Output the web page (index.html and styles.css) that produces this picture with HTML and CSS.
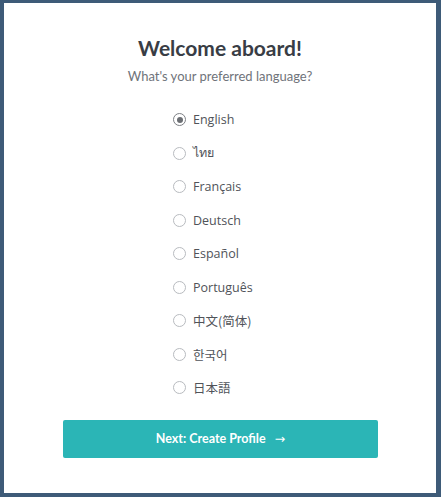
FILE: index.html
```html
<!DOCTYPE html>
<html>
<head>
<meta charset="utf-8">
<link rel="stylesheet" href="styles.css">
</head>
<body>
<div class="card">
  <h1 class="title">Welcome aboard!</h1>
  <p class="subtitle">What's your preferred language?</p>
  <ul class="langs">
    <li class="lang"><span class="radio checked"></span><span>English</span></li>
    <li class="lang"><span class="radio"></span><span class="thai">ไทย</span></li>
    <li class="lang"><span class="radio"></span><span>Français</span></li>
    <li class="lang"><span class="radio"></span><span>Deutsch</span></li>
    <li class="lang"><span class="radio"></span><span>Español</span></li>
    <li class="lang"><span class="radio"></span><span>Português</span></li>
    <li class="lang"><span class="radio"></span><span class="cjk">中文(简体)</span></li>
    <li class="lang"><span class="radio"></span><span class="cjk kr">한국어</span></li>
    <li class="lang"><span class="radio"></span><span class="cjk jp">日本語</span></li>
  </ul>
  <button class="next">Next: Create Profile <span class="arrow">→</span></button>
</div>
</body>
</html>
```
FILE: styles.css
```css
html, body {
  margin: 0;
  padding: 0;
}
body {
  width: 441px;
  height: 497px;
  background: #3e5b78;
  font-family: Lato, "Open Sans", sans-serif;
  padding: 3px 5px 4px 4px;
  box-sizing: border-box;
}
.card {
  background: #ffffff;
  height: 490px;
  display: flex;
  flex-direction: column;
  align-items: center;
  box-sizing: border-box;
  padding-top: 33px;
}
.title {
  margin: 0;
  font-size: 21px;
  line-height: 24px;
  font-weight: 700;
  color: #393d45;
}
.subtitle {
  margin: 8px 0 0;
  font-size: 13px;
  line-height: 16px;
  color: #6f737a;
}
.langs {
  list-style: none;
  margin: 19px 0 0;
  padding: 0;
  display: flex;
  flex-direction: column;
  width: 88px;
  margin-left: -6px;
}
.lang {
  display: flex;
  align-items: center;
  gap: 7px;
  height: 33.5px;
  font-family: "Open Sans", Lato, sans-serif;
  font-size: 12.5px;
  color: #505359;
}
.radio {
  width: 11px;
  height: 11px;
  border: 1px solid #b8bbbf;
  border-radius: 50%;
  box-sizing: content-box;
  flex: none;
  position: relative;
}
.radio.checked {
  border-color: #7d8085;
}
.radio.checked::after {
  content: "";
  position: absolute;
  left: 2.5px;
  top: 2.5px;
  width: 6px;
  height: 6px;
  border-radius: 50%;
  background: #6b6e73;
}
.cjk {
  font-family: "Noto Sans CJK SC", sans-serif;
}
.kr {
  font-family: "Noto Sans CJK KR", sans-serif;
}
.jp {
  font-family: "Noto Sans CJK JP", sans-serif;
}
.thai {
  font-family: "DejaVu Sans", serif;
}
.next {
  margin-top: 15px;
  width: 315px;
  height: 38px;
  border: none;
  border-radius: 2px;
  background: #2bb5b6;
  color: #ffffff;
  font-family: Lato, "Open Sans", sans-serif;
  font-size: 12.5px;
  font-weight: 700;
  margin-left: 1px;
}
.arrow {
  margin-left: 6px;
  font-weight: 400;
  font-family: "DejaVu Sans", sans-serif;
}
```
